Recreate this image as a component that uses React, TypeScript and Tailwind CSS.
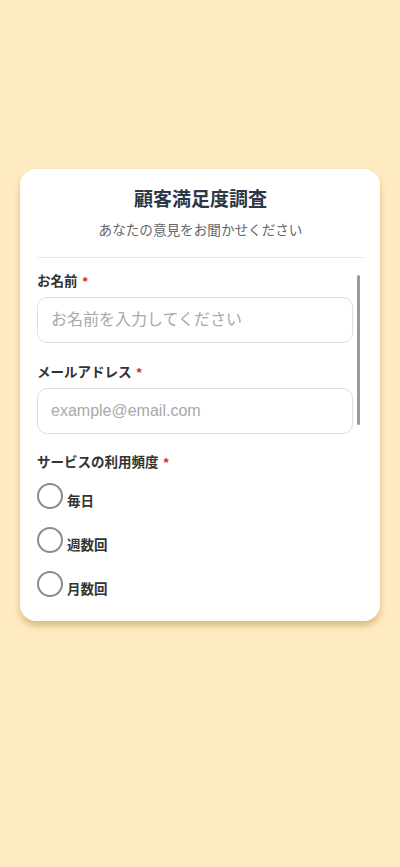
import React from "react";

const font = { fontFamily: '"Liberation Sans", "Noto Sans CJK JP", sans-serif' };

function Label({ children }: { children: React.ReactNode }) {
  return (
    <div className="flex items-center h-[20px] text-[13.5px] font-bold text-[#333333]">
      <span>{children}</span>
      <span className="ml-[5px] text-[#d32f2f]">*</span>
    </div>
  );
}

function Radio({ label }: { label: string }) {
  return (
    <label className="flex items-end gap-[4px] h-[26px]">
      <span className="w-[26px] h-[26px] rounded-full border-2 border-[#8c8c8c] bg-white shrink-0" />
      <span className="text-[13.5px] font-semibold text-[#333333] leading-[18px] mb-[-2px]">{label}</span>
    </label>
  );
}

export default function App() {
  return (
    <div className="min-h-[867px] w-[400px] bg-[#ffebc1] pt-[169px] px-[20px]" style={font}>
      <div className="relative bg-white rounded-[16px] shadow-[0_5px_6px_rgba(170,135,60,0.45)] pt-[17px] pb-[24px] pl-[17px] pr-[16px]">
        <h1 className="text-center text-[19px] font-bold leading-[27px] text-[#2d3748]">顧客満足度調査</h1>
        <p className="text-center text-[13.6px] leading-[20px] text-[#666666] mt-[8px]">あなたの意見をお聞かせください</p>
        <div className="h-px bg-[#e6e6e6] mt-[16px]" />
        <div className="pr-[11px] pt-[14px]">
          <Label>お名前</Label>
          <input
            className="mt-[5px] w-full h-[46px] rounded-[10px] border border-[#dedede] px-[13px] text-[16px] placeholder-[#a9a9a9] outline-none"
            placeholder="お名前を入力してください"
          />
          <div className="mt-[20px]">
            <Label>メールアドレス</Label>
          </div>
          <input
            className="mt-[5px] w-full h-[46px] rounded-[10px] border border-[#dedede] px-[13px] text-[16px] placeholder-[#a9a9a9] outline-none"
            placeholder="example@email.com"
          />
          <div className="mt-[19px]">
            <Label>サービスの利用頻度</Label>
          </div>
          <div className="mt-[10px] flex flex-col gap-[18px]">
            <Radio label="毎日" />
            <Radio label="週数回" />
            <Radio label="月数回" />
          </div>
        </div>
        <div className="absolute left-[337px] top-[106px] w-[3px] h-[150px] rounded-full bg-[#9a9a9a]" />
      </div>
    </div>
  );
}
